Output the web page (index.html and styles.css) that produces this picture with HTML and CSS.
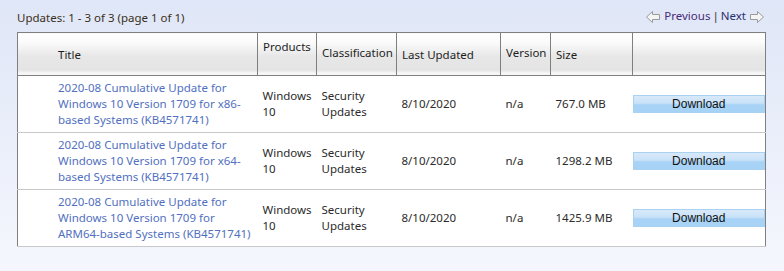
FILE: index.html
```html
<!DOCTYPE html>
<html lang="en">
<head>
    <meta charset="UTF-8">
    <title>Updates</title>
    <link rel="stylesheet" href="styles.css">
</head>
<body>
    <div class="page">
        <!-- Barra de paginação -->
        <div class="topbar">
            <span class="count">Updates: 1 - 3 of 3 (page 1 of 1)</span>
            <span class="pager">
                <svg class="arrow" width="14" height="12" viewBox="0 0 14 12"><polygon points="0.5,6 6.5,0.5 6.5,3.5 13.5,3.5 13.5,8.5 6.5,8.5 6.5,11.5" fill="#f4f4f4" stroke="#9a9a9a"/></svg>
                <a href="#" class="prev">Previous</a> | <a href="#" class="next">Next</a>
                <svg class="arrow" width="14" height="12" viewBox="0 0 14 12"><polygon points="13.5,6 7.5,0.5 7.5,3.5 0.5,3.5 0.5,8.5 7.5,8.5 7.5,11.5" fill="#f4f4f4" stroke="#9a9a9a"/></svg>
            </span>
        </div>

        <table class="results">
            <colgroup>
                <col class="c-title">
                <col class="c-prod">
                <col class="c-class">
                <col class="c-date">
                <col class="c-ver">
                <col class="c-size">
                <col class="c-btn">
            </colgroup>
            <thead>
                <tr>
                    <th class="h-title">Title</th>
                    <th class="h-prod">Products</th>
                    <th class="h-class">Classification</th>
                    <th class="h-date">Last Updated</th>
                    <th class="h-ver">Version</th>
                    <th class="h-size">Size</th>
                    <th></th>
                </tr>
            </thead>
            <tbody>
                <tr>
                    <td class="title"><a href="#">2020-08 Cumulative Update for Windows 10 Version 1709 for x86-based Systems (KB4571741)</a></td>
                    <td>Windows 10</td>
                    <td>Security Updates</td>
                    <td>8/10/2020</td>
                    <td>n/a</td>
                    <td>767.0 MB</td>
                    <td class="action"><button class="btn">Download</button></td>
                </tr>
                <tr>
                    <td class="title"><a href="#">2020-08 Cumulative Update for Windows 10 Version 1709 for x64-based Systems (KB4571741)</a></td>
                    <td>Windows 10</td>
                    <td>Security Updates</td>
                    <td>8/10/2020</td>
                    <td>n/a</td>
                    <td>1298.2 MB</td>
                    <td class="action"><button class="btn">Download</button></td>
                </tr>
                <tr>
                    <td class="title"><a href="#">2020-08 Cumulative Update for Windows 10 Version 1709 for ARM64-based Systems (KB4571741)</a></td>
                    <td>Windows 10</td>
                    <td>Security Updates</td>
                    <td>8/10/2020</td>
                    <td>n/a</td>
                    <td>1425.9 MB</td>
                    <td class="action"><button class="btn">Download</button></td>
                </tr>
            </tbody>
        </table>
    </div>
</body>
</html>
```

FILE: styles.css
```css
* {
    margin: 0;
    padding: 0;
    box-sizing: border-box;
}

html, body {
    height: 100%;
}

body {
    font-family: 'Noto Sans', sans-serif;
    font-size: 11.5px;
    color: #2b2b2b;
    background: linear-gradient(#dfe6f7, #f5f7fd);
}

.page {
    width: 749px;
    margin-left: 17px;
}

.topbar {
    display: flex;
    justify-content: space-between;
    align-items: center;
    height: 32px;
}

.count {
    color: #3a2f20;
    margin-top: 2px;
}

.pager {
    display: flex;
    align-items: center;
    gap: 2px;
    margin-top: -1px;
    color: #333;
}

.pager a {
    text-decoration: none;
}

.pager .prev {
    color: #4a2a78;
}

.pager .next {
    color: #27306e;
}

.arrow {
    margin: 3px 2px 0;
}

.results {
    width: 749px;
    table-layout: fixed;
    border-collapse: collapse;
    background-color: #fff;
    border-left: 1px solid #7f7f7f;
    border-right: 1px solid #7f7f7f;
    border-bottom: 1px solid #c8c8c8;
}

.c-title { width: 240px; }
.c-prod { width: 59px; }
.c-class { width: 80px; }
.c-date { width: 104px; }
.c-ver { width: 50px; }
.c-size { width: 82px; }
.c-btn { width: 133px; }

.results th {
    height: 43px;
    font-weight: normal;
    text-align: left;
    vertical-align: top;
    color: #1e1e1e;
    line-height: 16px;
    padding-left: 5px;
    border: 1px solid #7f7f7f;
    background: linear-gradient(#ffffff 0%, #fbfbfb 20%, #e7e7e7 55%, #e4e4e4 88%, #f6f6f6 94%, #f6f6f6 100%);
}

.results th.h-title { padding-left: 40px; padding-top: 14px; }
.results th.h-prod { padding-top: 6px; }
.results th.h-class { padding-top: 12px; }
.results th.h-date { padding-top: 14px; }
.results th.h-ver { padding-top: 12px; }
.results th.h-size { padding-top: 14px; }

.results td {
    height: 57px;
    line-height: 16px;
    padding-left: 5px;
    vertical-align: middle;
    border-bottom: 1px solid #c8c8c8;
}

.results td.title {
    padding-left: 40px;
    padding-right: 4px;
}

.results td.title a {
    color: #5170c0;
    text-decoration: none;
}

.results td.action {
    padding: 0;
}

.btn {
    display: block;
    width: 100%;
    height: 18px;
    margin-top: -1px;
    font-family: 'Liberation Sans', Arial, sans-serif;
    font-size: 12px;
    color: #111;
    border: 1px solid #a9d2f2;
    background: linear-gradient(#d8e9f9 0%, #c9e2f8 45%, #a8d3f6 55%, #a6d2f5 100%);
    cursor: pointer;
}
```
